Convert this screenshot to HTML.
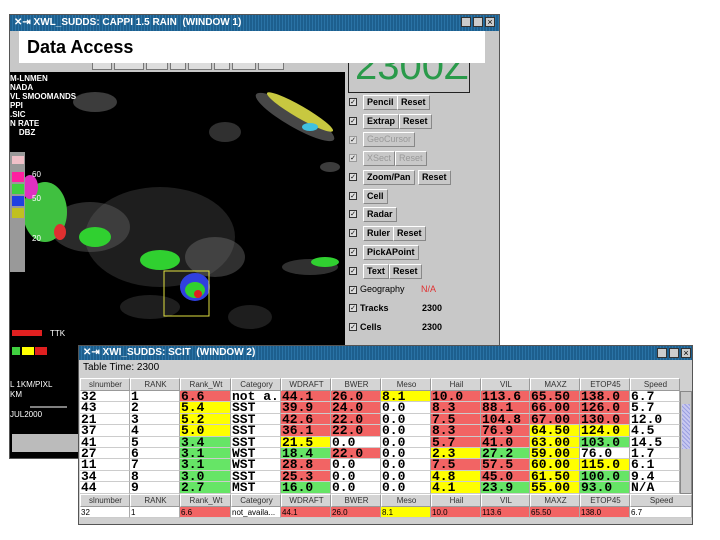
<!DOCTYPE html>
<html><head><meta charset="utf-8"><style>
*{margin:0;padding:0;box-sizing:border-box}
body{width:720px;height:540px;background:#fff;position:relative;overflow:hidden;font-family:"Liberation Sans",sans-serif}
.a{position:absolute}
.tb{background:repeating-linear-gradient(90deg,#1d5f8e 0 2px,#2a73a6 2px 3px);color:#fff;font-size:10px;font-weight:bold;line-height:16px;white-space:nowrap}
.btn{position:absolute;background:#c8c8c8;border:1px solid #888;border-top-color:#fff;border-left-color:#fff;font-size:9px;font-weight:bold;line-height:13px;padding:0 3px;color:#000;white-space:nowrap}
.dis{color:#999;font-weight:normal}
.ck{position:absolute;width:8px;height:8px;border:1px solid #333;background:#ddd;font-size:7px;line-height:7px;text-align:center}
.lbl{position:absolute;font-size:9px;font-weight:bold;white-space:nowrap}
.wb{position:absolute;width:10px;height:10px;background:#ccc;border:1px solid #333}
.tbl{position:absolute;left:80px;width:600px}
.row{position:absolute;left:0;height:11.4px;width:600px}
.row span{position:absolute;top:0;height:11.4px;font-family:"Liberation Mono",monospace;font-size:13px;line-height:11px;padding-left:1px;overflow:hidden;white-space:nowrap;background:#fff;border-right:1px solid #aaa;border-bottom:1px solid #ccc;font-weight:bold}
.row.hd span{height:13px;font-family:"Liberation Sans",sans-serif;font-weight:normal;font-size:8px;line-height:12px;text-align:center;color:#333;background:#d4d4d4;border:1px solid #999;border-top-color:#fff;border-left-color:#fff}
.R{background:#f26464!important}.Y{background:#ffff00!important}.G{background:#66e566!important}
.c1{left:0;width:50px}.c2{left:50px;width:50px}.c3{left:100px;width:51px}.c4{left:151px;width:50px}.c5{left:201px;width:50px}.c6{left:251px;width:50px}.c7{left:301px;width:50px}.c8{left:351px;width:50px}.c9{left:401px;width:49px}.c10{left:450px;width:50px}.c11{left:500px;width:50px}.c12{left:550px;width:50px}
.row.ft span{font-size:8px;font-weight:normal;font-family:"Liberation Sans",sans-serif}
</style></head><body>

<div class="a" style="left:9px;top:14px;width:491px;height:445px;background:#c8c8c8;border:1px solid #555"></div>
<div class="a tb" style="left:10px;top:15px;width:489px;height:16px;padding-left:4px">✕⇥ XWL_SUDDS: CAPPI 1.5 RAIN &nbsp;(WINDOW 1)</div>
<div class="wb" style="left:461px;top:17px"></div><div class="wb" style="left:473px;top:17px"></div><div class="wb" style="left:485px;top:17px;font-size:9px;line-height:8px;text-align:center">×</div>
<div class="a" style="left:92px;top:62px;width:20px;height:8px;border:1px solid #777;background:#ddd"></div>
<div class="a" style="left:114px;top:62px;width:30px;height:8px;border:1px solid #777;background:#ddd"></div>
<div class="a" style="left:146px;top:62px;width:22px;height:8px;border:1px solid #777;background:#ddd"></div>
<div class="a" style="left:170px;top:62px;width:16px;height:8px;border:1px solid #777;background:#ddd"></div>
<div class="a" style="left:188px;top:62px;width:24px;height:8px;border:1px solid #777;background:#ddd"></div>
<div class="a" style="left:214px;top:62px;width:16px;height:8px;border:1px solid #777;background:#ddd"></div>
<div class="a" style="left:232px;top:62px;width:24px;height:8px;border:1px solid #777;background:#ddd"></div>
<div class="a" style="left:258px;top:62px;width:26px;height:8px;border:1px solid #777;background:#ddd"></div>
<div class="a" style="left:10px;top:72px;width:335px;height:386px;background:#000;overflow:hidden">
<svg width="335" height="386" style="position:absolute;left:0;top:0">
<g fill="#777">
<ellipse cx="150" cy="165" rx="75" ry="50" opacity=".25"/>
<ellipse cx="85" cy="30" rx="22" ry="10" opacity=".5"/>
<ellipse cx="215" cy="60" rx="16" ry="10" opacity=".4"/>
<ellipse cx="285" cy="45" rx="45" ry="10" transform="rotate(30 285 45)" opacity=".6"/>
<ellipse cx="320" cy="95" rx="10" ry="5" opacity=".5"/>
<ellipse cx="80" cy="155" rx="40" ry="25" opacity=".35"/>
<ellipse cx="205" cy="185" rx="30" ry="20" opacity=".4"/>
<ellipse cx="140" cy="235" rx="30" ry="12" opacity=".25"/>
<ellipse cx="240" cy="245" rx="22" ry="12" opacity=".25"/>
<ellipse cx="110" cy="300" rx="40" ry="18" opacity=".2"/>
<ellipse cx="300" cy="195" rx="28" ry="8" opacity=".4"/>
</g>
<ellipse cx="290" cy="40" rx="38" ry="6" fill="#c8c840" transform="rotate(30 290 40)"/>
<ellipse cx="300" cy="55" rx="8" ry="4" fill="#40c0e0"/>
<ellipse cx="35" cy="140" rx="22" ry="30" fill="#40c040"/>
<ellipse cx="85" cy="165" rx="16" ry="10" fill="#30d030"/>
<ellipse cx="150" cy="188" rx="20" ry="10" fill="#30d030"/>
<ellipse cx="185" cy="215" rx="15" ry="14" fill="#3040e0"/>
<ellipse cx="185" cy="218" rx="10" ry="8" fill="#30d030"/>
<circle cx="188" cy="222" r="4" fill="#e02020"/>
<ellipse cx="315" cy="190" rx="14" ry="5" fill="#30d030"/>
<ellipse cx="50" cy="160" rx="6" ry="8" fill="#e03030"/>
<ellipse cx="20" cy="115" rx="8" ry="12" fill="#e030c0"/>
<rect x="154" y="199" width="45" height="45" fill="none" stroke="#e0e040"/>
<rect x="0" y="80" width="15" height="120" fill="#999"/>
<rect x="2" y="84" width="12" height="8" fill="#f0c0c8"/>
<rect x="2" y="100" width="12" height="10" fill="#ff20a0"/>
<rect x="2" y="112" width="12" height="10" fill="#40d040"/>
<rect x="2" y="124" width="12" height="10" fill="#2040e0"/>
<rect x="2" y="136" width="12" height="10" fill="#c0c020"/>
<rect x="2" y="258" width="30" height="6" fill="#e02020"/>
<rect x="2" y="275" width="8" height="8" fill="#40d040"/><rect x="12" y="275" width="12" height="8" fill="#ffff00"/><rect x="25" y="275" width="12" height="8" fill="#e02020"/>
<line x1="20" y1="335" x2="57" y2="335" stroke="#fff"/>
<rect x="2" y="362" width="66" height="18" fill="#bbb"/>
</svg>
<div class="a" style="left:0;top:2px;color:#fff;font-size:8px;line-height:9px;font-weight:bold">M-LNMEN<br>NADA<br>VL SMOOMANDS<br>PPI<br>.SIC<br>N RATE<br>&nbsp;&nbsp;&nbsp;&nbsp;DBZ</div>
<div class="a" style="left:22px;top:98px;color:#fff;font-size:8px">60</div>
<div class="a" style="left:22px;top:122px;color:#fff;font-size:8px">50</div>
<div class="a" style="left:22px;top:162px;color:#fff;font-size:8px">20</div>
<div class="a" style="left:40px;top:257px;color:#fff;font-size:8px">TTK</div>
<div class="a" style="left:0;top:308px;color:#fff;font-size:8px;line-height:10px">L 1KM/PIXL<br>KM<br><br>JUL2000</div>
</div>
<div class="a" style="left:19px;top:31px;width:466px;height:32px;background:#fff;font-size:18px;font-weight:bold;line-height:32px;padding-left:8px">Data Access</div>
<div class="a" style="left:348px;top:63px;width:122px;height:30px;border:1px solid #222;border-top:none;overflow:hidden;background:#c8c8c8"><div style="font-size:40px;color:#2a9a4a;line-height:30px;margin-top:-12px;padding-left:6px">2300Z</div></div>
<div class="ck" style="left:349px;top:98px">✓</div><div class="btn" style="left:363px;top:95px">Pencil</div><div class="btn" style="left:397px;top:95px">Reset</div>
<div class="ck" style="left:349px;top:117px">✓</div><div class="btn" style="left:363px;top:114px">Extrap</div><div class="btn" style="left:399px;top:114px">Reset</div>
<div class="ck" style="left:349px;top:136px;border-color:#999">✓</div><div class="btn dis" style="left:363px;top:132px">GeoCursor</div>
<div class="ck" style="left:349px;top:154px;border-color:#999">✓</div><div class="btn dis" style="left:363px;top:151px">XSect</div><div class="btn dis" style="left:395px;top:151px">Reset</div>
<div class="ck" style="left:349px;top:173px">✓</div><div class="btn" style="left:363px;top:170px">Zoom/Pan</div><div class="btn" style="left:418px;top:170px">Reset</div>
<div class="ck" style="left:349px;top:192px">✓</div><div class="btn" style="left:363px;top:189px">Cell</div>
<div class="ck" style="left:349px;top:210px">✓</div><div class="btn" style="left:363px;top:207px">Radar</div>
<div class="ck" style="left:349px;top:229px">✓</div><div class="btn" style="left:363px;top:226px">Ruler</div><div class="btn" style="left:393px;top:226px">Reset</div>
<div class="ck" style="left:349px;top:248px">✓</div><div class="btn" style="left:363px;top:245px">PickAPoint</div>
<div class="ck" style="left:349px;top:267px">✓</div><div class="btn" style="left:363px;top:264px">Text</div><div class="btn" style="left:389px;top:264px">Reset</div>
<div class="ck" style="left:349px;top:286px">✓</div><div class="lbl" style="left:360px;top:284px;font-weight:normal">Geography</div><div class="lbl" style="left:421px;top:284px;color:#e03030;font-weight:normal">N/A</div>
<div class="ck" style="left:349px;top:304px">✓</div><div class="lbl" style="left:360px;top:303px">Tracks</div><div class="lbl" style="left:422px;top:303px">2300</div>
<div class="ck" style="left:349px;top:323px">✓</div><div class="lbl" style="left:360px;top:322px">Cells</div><div class="lbl" style="left:422px;top:322px">2300</div>

<div class="a" style="left:78px;top:345px;width:615px;height:180px;background:#d0d0d0;border:1px solid #555"></div>
<div class="a tb" style="left:79px;top:346px;width:613px;height:14px;line-height:14px;padding-left:4px">✕⇥ XWI_SUDDS: SCIT &nbsp;(WINDOW 2)</div>
<div class="wb" style="left:657px;top:348px"></div><div class="wb" style="left:669px;top:348px"></div><div class="wb" style="left:681px;top:348px;font-size:9px;line-height:8px;text-align:center">×</div>
<div class="a" style="left:83px;top:362px;font-size:10px">Table Time: 2300</div>

<div class="tbl" style="top:378px">
<div class="row hd" style="top:0"><span class="c1">slnumber</span><span class="c2">RANK</span><span class="c3">Rank_Wt</span><span class="c4">Category</span><span class="c5">WDRAFT</span><span class="c6">BWER</span><span class="c7">Meso</span><span class="c8">Hail</span><span class="c9">VIL</span><span class="c10">MAXZ</span><span class="c11">ETOP45</span><span class="c12">Speed</span></div>
<div class="row" style="top:13px"><span class="c1">32</span><span class="c2">1</span><span class="c3 R">6.6</span><span class="c4">not_a...</span><span class="c5 R">44.1</span><span class="c6 R">26.0</span><span class="c7 Y">8.1</span><span class="c8 R">10.0</span><span class="c9 R">113.6</span><span class="c10 R">65.50</span><span class="c11 R">138.0</span><span class="c12">6.7</span></div>
<div class="row" style="top:24.4px"><span class="c1">43</span><span class="c2">2</span><span class="c3 Y">5.4</span><span class="c4">SST</span><span class="c5 R">39.9</span><span class="c6 R">24.0</span><span class="c7">0.0</span><span class="c8 R">8.3</span><span class="c9 R">88.1</span><span class="c10 R">66.00</span><span class="c11 R">126.0</span><span class="c12">5.7</span></div>
<div class="row" style="top:35.8px"><span class="c1">21</span><span class="c2">3</span><span class="c3 Y">5.2</span><span class="c4">SST</span><span class="c5 R">42.6</span><span class="c6 R">22.0</span><span class="c7">0.0</span><span class="c8 R">7.5</span><span class="c9 R">104.8</span><span class="c10 R">67.00</span><span class="c11 R">130.0</span><span class="c12">12.0</span></div>
<div class="row" style="top:47.2px"><span class="c1">37</span><span class="c2">4</span><span class="c3 Y">5.0</span><span class="c4">SST</span><span class="c5 R">36.1</span><span class="c6 R">22.0</span><span class="c7">0.0</span><span class="c8 R">8.3</span><span class="c9 R">76.9</span><span class="c10 Y">64.50</span><span class="c11 Y">124.0</span><span class="c12">4.5</span></div>
<div class="row" style="top:58.6px"><span class="c1">41</span><span class="c2">5</span><span class="c3 G">3.4</span><span class="c4">SST</span><span class="c5 Y">21.5</span><span class="c6">0.0</span><span class="c7">0.0</span><span class="c8 R">5.7</span><span class="c9 R">41.0</span><span class="c10 Y">63.00</span><span class="c11 G">103.0</span><span class="c12">14.5</span></div>
<div class="row" style="top:70px"><span class="c1">27</span><span class="c2">6</span><span class="c3 G">3.1</span><span class="c4">WST</span><span class="c5 G">18.4</span><span class="c6 R">22.0</span><span class="c7">0.0</span><span class="c8 Y">2.3</span><span class="c9 G">27.2</span><span class="c10 Y">59.00</span><span class="c11">76.0</span><span class="c12">1.7</span></div>
<div class="row" style="top:81.4px"><span class="c1">11</span><span class="c2">7</span><span class="c3 G">3.1</span><span class="c4">WST</span><span class="c5 R">28.8</span><span class="c6">0.0</span><span class="c7">0.0</span><span class="c8 R">7.5</span><span class="c9 R">57.5</span><span class="c10 Y">60.00</span><span class="c11 Y">115.0</span><span class="c12">6.1</span></div>
<div class="row" style="top:92.8px"><span class="c1">34</span><span class="c2">8</span><span class="c3 G">3.0</span><span class="c4">SST</span><span class="c5 R">25.3</span><span class="c6">0.0</span><span class="c7">0.0</span><span class="c8 Y">4.8</span><span class="c9 R">45.0</span><span class="c10 Y">61.50</span><span class="c11 G">100.0</span><span class="c12">9.4</span></div>
<div class="row" style="top:104.2px"><span class="c1">44</span><span class="c2">9</span><span class="c3 G">2.7</span><span class="c4">MST</span><span class="c5 G">16.0</span><span class="c6">0.0</span><span class="c7">0.0</span><span class="c8 Y">4.1</span><span class="c9 G">23.9</span><span class="c10 Y">55.00</span><span class="c11 G">93.0</span><span class="c12">N/A</span></div>
</div>
<div class="a" style="left:680px;top:391px;width:12px;height:103px;background:#c8c8c8;border:1px solid #888"><div style="margin:12px 1px;height:45px;background:repeating-linear-gradient(45deg,#9aa0e0 0 1px,#c8c8f0 1px 3px)"></div></div>

<div class="tbl" style="top:494px;width:612px">
<div class="row hd" style="top:0"><span class="c1">slnumber</span><span class="c2">RANK</span><span class="c3">Rank_Wt</span><span class="c4">Category</span><span class="c5">WDRAFT</span><span class="c6">BWER</span><span class="c7">Meso</span><span class="c8">Hail</span><span class="c9">VIL</span><span class="c10">MAXZ</span><span class="c11">ETOP45</span><span class="c12" style="width:62px">Speed</span></div>
<div class="row ft" style="top:13px"><span class="c1">32</span><span class="c2">1</span><span class="c3 R">6.6</span><span class="c4">not_availa...</span><span class="c5 R">44.1</span><span class="c6 R">26.0</span><span class="c7 Y">8.1</span><span class="c8 R">10.0</span><span class="c9 R">113.6</span><span class="c10 R">65.50</span><span class="c11 R">138.0</span><span class="c12" style="width:62px">6.7</span></div>
</div>
</body></html>
